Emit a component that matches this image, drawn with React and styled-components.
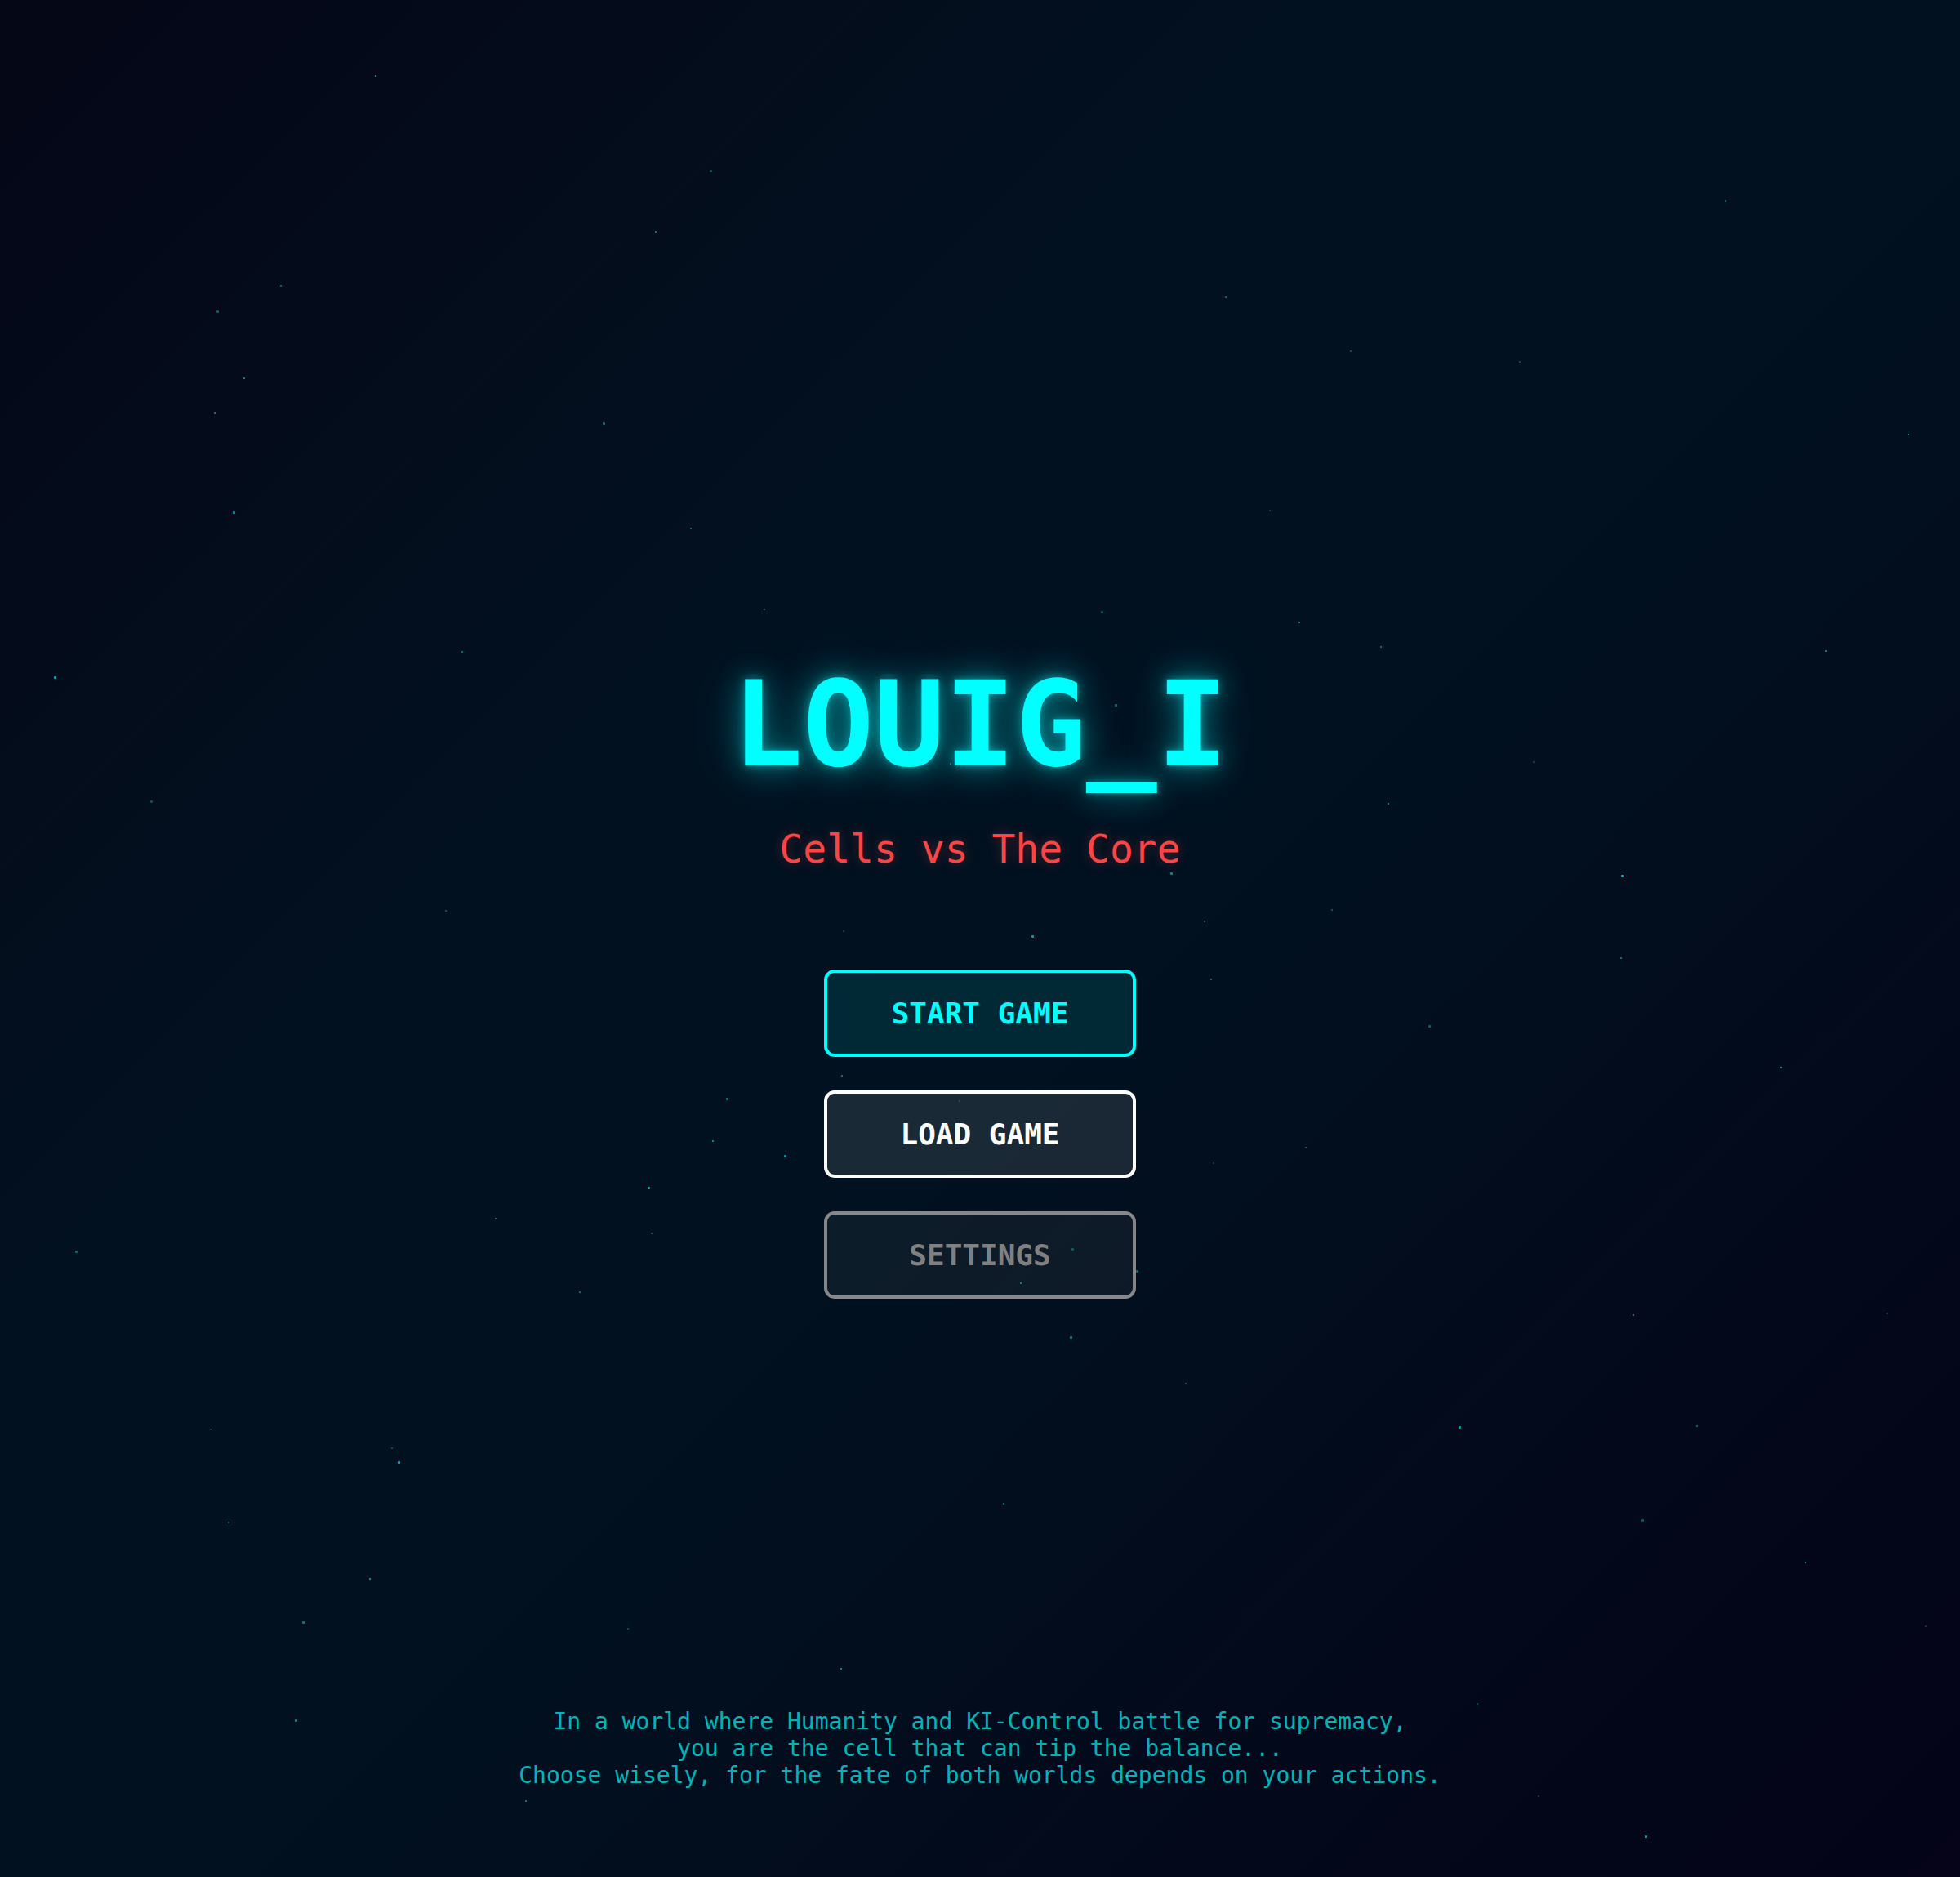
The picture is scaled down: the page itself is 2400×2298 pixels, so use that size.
import React from "react";
import styled, { createGlobalStyle } from "styled-components";

const GlobalStyle = createGlobalStyle`
  html, body {
    margin: 0;
    padding: 0;
    background: #020d1c;
  }
  * { box-sizing: border-box; }
`;

const Screen = styled.div`
  position: relative;
  min-height: 100vh;
  overflow: hidden;
  display: flex;
  flex-direction: column;
  align-items: center;
  padding: 803px 0 108px;
  font-family: "DejaVu Sans Mono", "Liberation Mono", monospace;
  background: linear-gradient(
    135deg,
    #050616 0%,
    #021120 35%,
    #011120 55%,
    #030719 85%,
    #050418 100%
  );
`;

const StarField = styled.div`
  position: absolute;
  inset: 0;
  pointer-events: none;
`;

const Star = styled.span`
  position: absolute;
  width: ${(p) => p.$size}px;
  height: ${(p) => p.$size}px;
  background: #00e5e5;
  border-radius: 1px;
`;

const Title = styled.h1`
  position: relative;
  margin: 0;
  font-size: 144px;
  font-weight: 700;
  line-height: normal;
  color: #00ffff;
  text-shadow: 0 0 12px rgba(0, 255, 255, 0.45), 0 0 36px rgba(0, 255, 255, 0.45),
    0 0 70px rgba(0, 255, 255, 0.25);
`;

const Subtitle = styled.h2`
  position: relative;
  margin: 40px 0 0;
  font-size: 48px;
  font-weight: 400;
  line-height: normal;
  color: #ff4444;
  text-shadow: 0 0 14px rgba(255, 68, 68, 0.35);
`;

const Menu = styled.nav`
  position: relative;
  margin-top: 120px;
  display: flex;
  flex-direction: column;
  gap: 41px;
`;

const variants = {
  primary: { color: "#00ffff", border: "#00ffff", bg: "rgba(0, 255, 255, 0.1)" },
  secondary: { color: "#ffffff", border: "#ffffff", bg: "rgba(255, 255, 255, 0.1)" },
  muted: { color: "#808080", border: "#888888", bg: "rgba(128, 128, 128, 0.1)" },
};

const MenuButton = styled.button`
  width: 382px;
  padding: 29px 0;
  border: 4px solid ${(p) => variants[p.$variant].border};
  border-radius: 13px;
  background: ${(p) => variants[p.$variant].bg};
  color: ${(p) => variants[p.$variant].color};
  font-family: "DejaVu Sans Mono", "Liberation Mono", monospace;
  font-size: 36px;
  font-weight: 700;
  line-height: normal;
  cursor: pointer;
`;

const Lore = styled.p`
  position: relative;
  margin: auto 0 0;
  font-size: 28px;
  line-height: normal;
  text-align: center;
  color: rgba(0, 255, 255, 0.7);
`;

const STAR_POINTS = [
  [568, 136], [524, 185], [224, 228], [173, 248], [195, 302], [171, 330],
  [482, 338], [1215, 289], [1526, 347], [186, 409], [552, 422], [1015, 408],
  [43, 541], [369, 521], [611, 487], [881, 489], [1039, 497], [1104, 517],
  [892, 563], [1226, 609], [1110, 642], [936, 698], [356, 728], [674, 744],
  [825, 748], [963, 736], [1065, 727], [1297, 700], [1296, 766], [968, 783],
  [1143, 820], [1424, 853], [673, 860], [581, 878], [767, 880], [570, 912],
  [627, 924], [1044, 917], [970, 930], [518, 949], [396, 974], [521, 986],
  [857, 998], [816, 1026], [463, 1033], [909, 1016], [1509, 1050], [1306, 1051],
  [856, 1069], [948, 1106], [168, 1143], [1167, 1141], [1357, 1140], [313, 1158],
  [318, 1169], [802, 1202], [182, 1217], [1313, 1215], [295, 1262], [1444, 1249],
  [242, 1297], [502, 1302], [672, 1334], [236, 1375], [1181, 1362], [1230, 1436],
  [1316, 1468], [980, 237], [1380, 160], [120, 640], [1460, 520], [760, 610],
  [60, 1000], [1540, 1300], [420, 1440], [900, 1420], [1080, 280], [300, 60],
];

const SCALE = 2400 / 1568;

const stars = STAR_POINTS.map(([x, y], i) => ({
  left: Math.round(x * SCALE),
  top: Math.round(y * SCALE),
  size: i % 3 === 0 ? 3 : 2,
  opacity: 0.3 + ((i * 37) % 50) / 100,
}));

export default function App() {
  return (
    <>
      <GlobalStyle />
      <Screen>
        <StarField>
          {stars.map((s, i) => (
            <Star
              key={i}
              $size={s.size}
              style={{ left: s.left, top: s.top, opacity: s.opacity }}
            />
          ))}
        </StarField>
        <Title>LOUIG_I</Title>
        <Subtitle>Cells vs The Core</Subtitle>
        <Menu>
          <MenuButton $variant="primary">START GAME</MenuButton>
          <MenuButton $variant="secondary">LOAD GAME</MenuButton>
          <MenuButton $variant="muted">SETTINGS</MenuButton>
        </Menu>
        <Lore>
          In a world where Humanity and KI-Control battle for supremacy,
          <br />
          you are the cell that can tip the balance...
          <br />
          Choose wisely, for the fate of both worlds depends on your actions.
        </Lore>
      </Screen>
    </>
  );
}
